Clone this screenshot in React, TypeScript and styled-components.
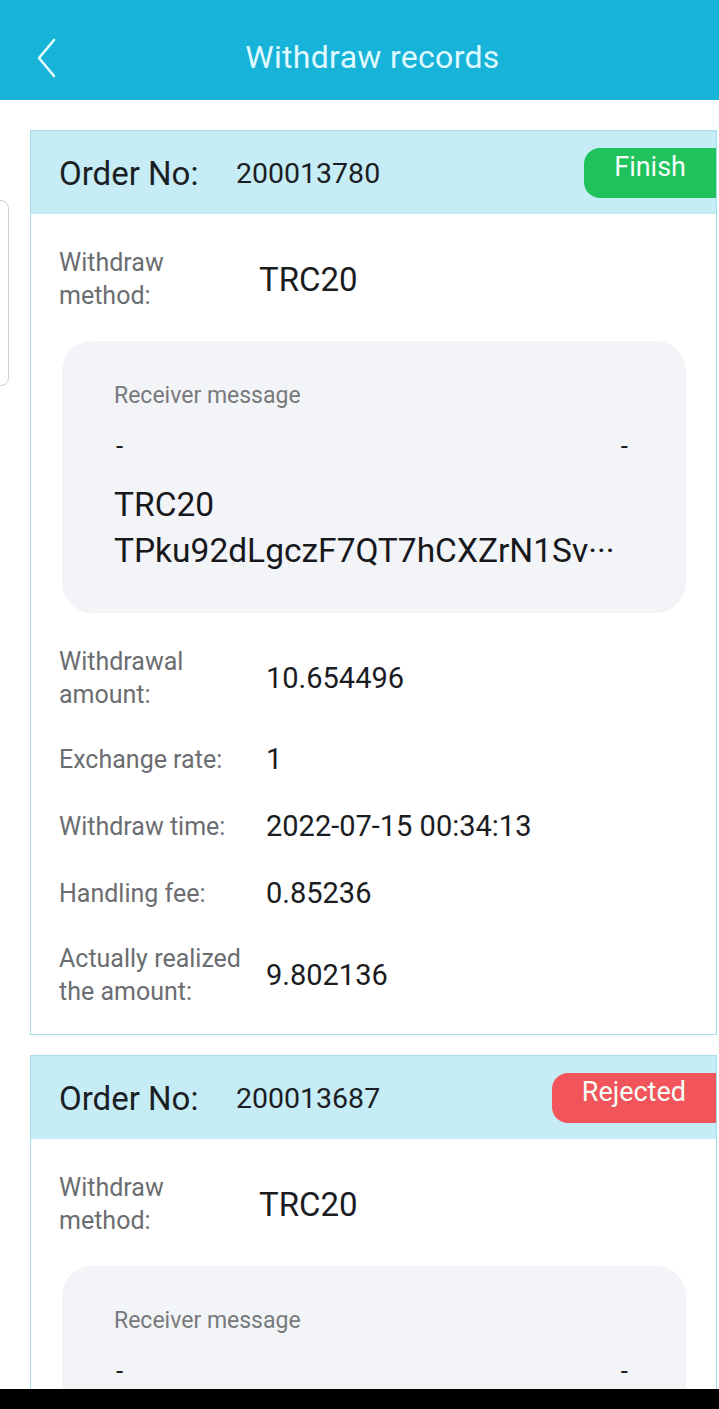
import React from 'react';
import styled, { createGlobalStyle } from 'styled-components';

const GlobalStyle = createGlobalStyle`
  * { box-sizing: border-box; }
  html, body { margin: 0; padding: 0; background: #ffffff; }
  body { font-family: Roboto, "Noto Sans", Arial, sans-serif; }
`;

type Status = 'finish' | 'rejected';

interface Record {
  orderNo: string;
  status: Status;
  method: string;
  receiverNetwork: string;
  receiverAddress: string;
  amount: string;
  rate: string;
  time: string;
  fee: string;
  realized: string;
}

const records: Record[] = [
  {
    orderNo: '200013780',
    status: 'finish',
    method: 'TRC20',
    receiverNetwork: 'TRC20',
    receiverAddress: 'TPku92dLgczF7QT7hCXZrN1Sv···',
    amount: '10.654496',
    rate: '1',
    time: '2022-07-15 00:34:13',
    fee: '0.85236',
    realized: '9.802136',
  },
  {
    orderNo: '200013687',
    status: 'rejected',
    method: 'TRC20',
    receiverNetwork: 'TRC20',
    receiverAddress: 'TPku92dLgczF7QT7hCXZrN1Sv···',
    amount: '10.654496',
    rate: '1',
    time: '2022-07-14 21:10:52',
    fee: '0.85236',
    realized: '9.802136',
  },
];

const Screen = styled.div`
  position: relative;
  width: 719px;
  height: 1409px;
  display: flex;
  flex-direction: column;
  overflow: hidden;
  background: #ffffff;
`;

const TopBar = styled.header`
  height: 100px;
  flex-shrink: 0;
  background: #17b3d8;
  display: flex;
  align-items: center;
  justify-content: center;
  position: relative;
  padding: 14px 0 0 26px;
`;

const BackButton = styled.button`
  position: absolute;
  left: 30px;
  top: 36px;
  width: 34px;
  height: 44px;
  border: none;
  background: transparent;
  padding: 0;
  display: flex;
  align-items: center;
  justify-content: center;
`;

const Title = styled.h1`
  margin: 0;
  font-size: 32px;
  font-weight: 400;
  color: #def9ff;
  letter-spacing: 0.3px;
`;

const Content = styled.main`
  flex: 1;
  overflow: hidden;
  padding: 30px 2px 0 30px;
  display: flex;
  flex-direction: column;
  gap: 20px;
`;

const SideTab = styled.div`
  position: absolute;
  left: -4px;
  top: 200px;
  width: 13px;
  height: 186px;
  border: 1px solid #cfd3d6;
  border-radius: 0 8px 8px 0;
  background: #ffffff;
`;

const Card = styled.section`
  flex-shrink: 0;
  border: 1px solid #a6dbe7;
  background: #ffffff;
`;

const CardHeader = styled.div`
  height: 83px;
  background: #c6ecf5;
  display: flex;
  align-items: center;
  padding-left: 28px;
  position: relative;
`;

const OrderLabel = styled.span`
  font-size: 33px;
  color: #1b1f24;
  width: 177px;
  padding-top: 2px;
`;

const OrderNo = styled.span`
  font-size: 28.5px;
  color: #1b1f24;
  padding-top: 2px;
`;

const Badge = styled.span<{ $status: Status }>`
  position: absolute;
  right: 0;
  top: 17px;
  height: 50px;
  padding: 2px 30px 0 30px;
  border-radius: 16px 0 0 16px;
  background: ${({ $status }) => ($status === 'finish' ? '#1fc25d' : '#f1545a')};
  color: #f4fff7;
  font-size: 27px;
  line-height: 34px;
`;

const CardBody = styled.div`
  padding: 32px 28px 26px 28px;
  display: flex;
  flex-direction: column;
`;

const Row = styled.div<{ $labelWidth?: number; $after?: number }>`
  display: flex;
  align-items: center;
  margin-bottom: ${({ $after }) => ($after ?? 34)}px;

  &:last-child {
    margin-bottom: 0;
  }

  & > span:first-child {
    width: ${({ $labelWidth }) => $labelWidth ?? 207}px;
  }
`;

const Label = styled.span`
  flex-shrink: 0;
  font-size: 25px;
  line-height: 33px;
  color: #6b6d70;
`;

const Value = styled.span<{ $big?: boolean }>`
  font-size: ${({ $big }) => ($big ? 33 : 29)}px;
  line-height: 33px;
  color: #1a1c1f;
`;

const ReceiverBox = styled.div`
  margin: 0 0 32px 3px;
  width: 624px;
  height: 272px;
  border-radius: 30px;
  background: #f3f4f8;
  padding: 40px 58px 0 52px;
`;

const ReceiverTitle = styled.div`
  font-size: 23px;
  line-height: 30px;
  color: #78797c;
`;

const DashRow = styled.div`
  display: flex;
  justify-content: space-between;
  margin-top: 20px;
  font-size: 26px;
  line-height: 30px;
  color: #1a1c1f;
  padding-left: 2px;
`;

const ReceiverText = styled.div`
  margin-top: 21px;
  font-size: 33.5px;
  line-height: 46px;
  color: #16181b;
  white-space: nowrap;
`;

const NavBar = styled.div`
  height: 20px;
  flex-shrink: 0;
  background: #000000;
`;

const ChevronLeft: React.FC = () => (
  <svg width="22" height="40" viewBox="0 0 22 40" fill="none">
    <polyline points="18,2 3,20 18,38" stroke="#e4fbff" strokeWidth="2.6" strokeLinecap="round" strokeLinejoin="round" />
  </svg>
);

const RecordCard: React.FC<{ record: Record }> = ({ record }) => (
  <Card>
    <CardHeader>
      <OrderLabel>Order No:</OrderLabel>
      <OrderNo>{record.orderNo}</OrderNo>
      <Badge $status={record.status}>{record.status === 'finish' ? 'Finish' : 'Rejected'}</Badge>
    </CardHeader>
    <CardBody>
      <Row $labelWidth={200} $after={29}>
        <Label>Withdraw<br />method:</Label>
        <Value $big>{record.method}</Value>
      </Row>
      <ReceiverBox>
        <ReceiverTitle>Receiver message</ReceiverTitle>
        <DashRow>
          <span>-</span>
          <span>-</span>
        </DashRow>
        <ReceiverText>
          {record.receiverNetwork}
          <br />
          {record.receiverAddress}
        </ReceiverText>
      </ReceiverBox>
      <Row $after={32}>
        <Label>Withdrawal<br />amount:</Label>
        <Value>{record.amount}</Value>
      </Row>
      <Row>
        <Label>Exchange rate:</Label>
        <Value>{record.rate}</Value>
      </Row>
      <Row>
        <Label>Withdraw time:</Label>
        <Value>{record.time}</Value>
      </Row>
      <Row $after={32}>
        <Label>Handling fee:</Label>
        <Value>{record.fee}</Value>
      </Row>
      <Row>
        <Label>Actually realized<br />the amount:</Label>
        <Value>{record.realized}</Value>
      </Row>
    </CardBody>
  </Card>
);

const App: React.FC = () => (
  <Screen>
    <GlobalStyle />
    <TopBar>
      <BackButton aria-label="Back">
        <ChevronLeft />
      </BackButton>
      <Title>Withdraw records</Title>
    </TopBar>
    <Content>
      {records.map(r => (
        <RecordCard key={r.orderNo} record={r} />
      ))}
    </Content>
    <SideTab />
    <NavBar />
  </Screen>
);

export default App;
